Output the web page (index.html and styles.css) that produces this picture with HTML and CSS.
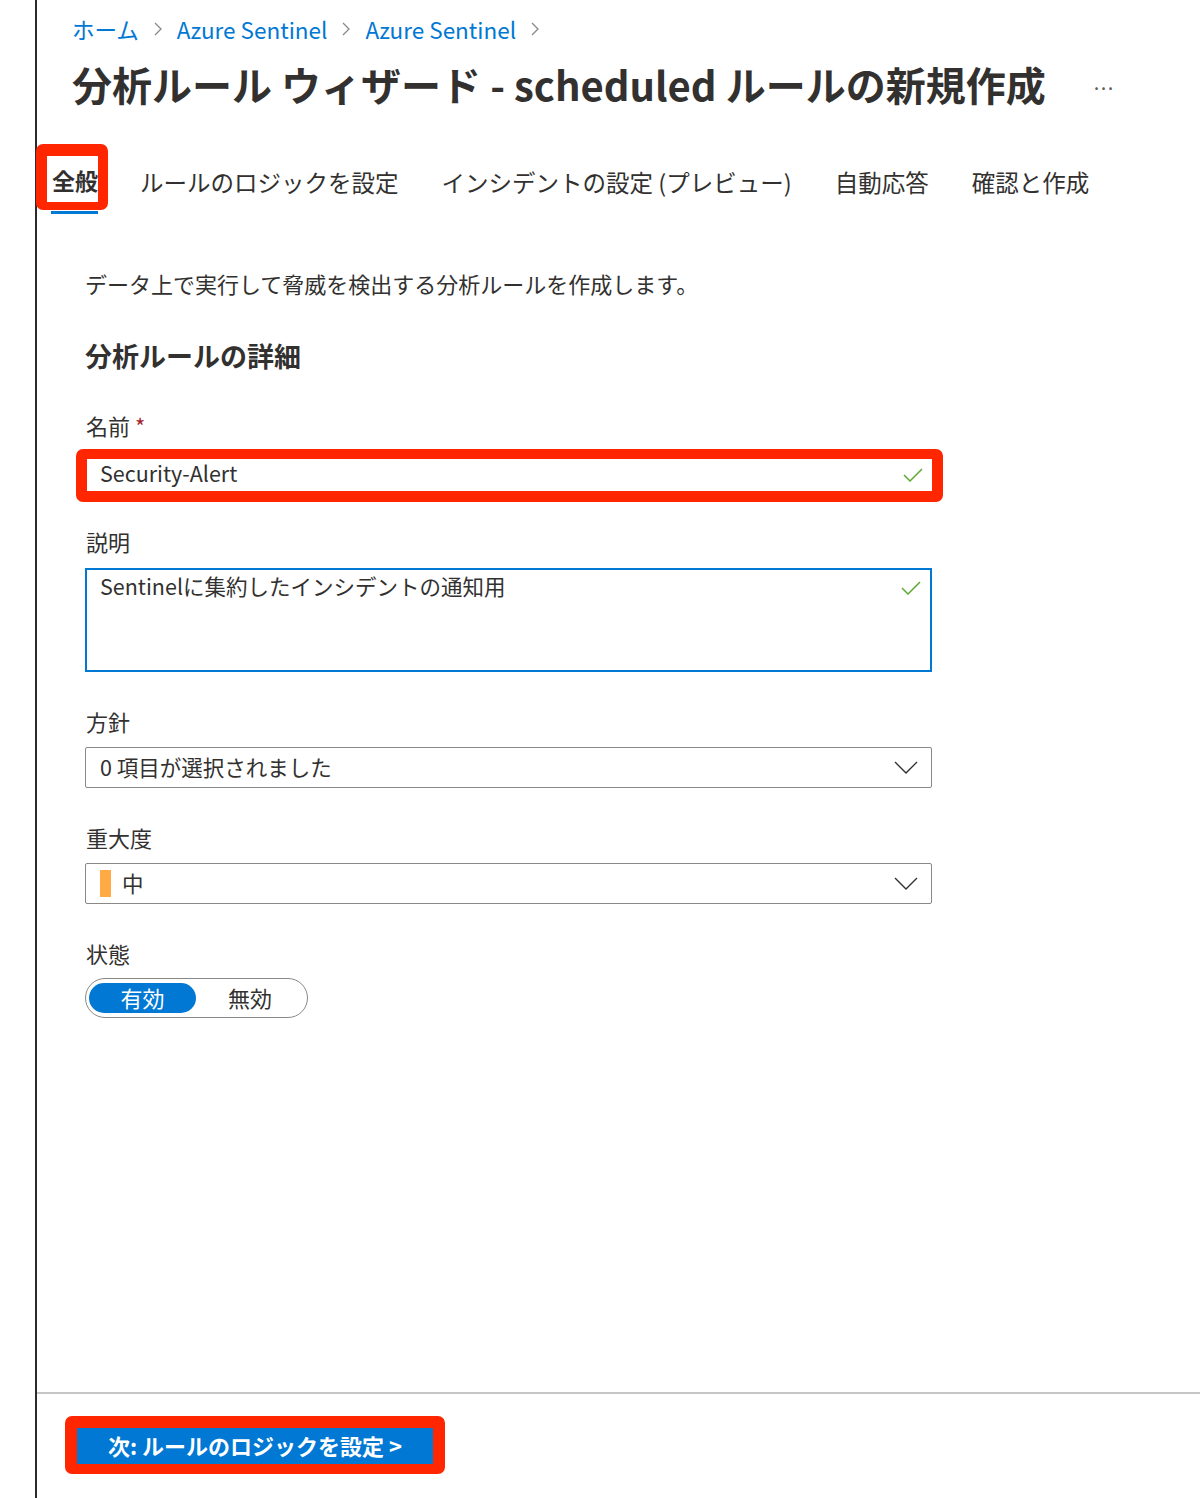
FILE: index.html
```html
<!DOCTYPE html>
<html lang="ja">
<head>
<meta charset="utf-8">
<title>分析ルール ウィザード</title>
<link rel="stylesheet" href="styles.css">
</head>
<body>
<div class="page">
  <header class="header">
    <nav class="crumbs">
      <a class="crumb">ホーム</a>
      <svg class="crumb-sep" viewBox="0 0 8 14" width="8" height="14"><polyline points="1,1 7,7 1,13" fill="none" stroke="#8a8886" stroke-width="1.3"/></svg>
      <a class="crumb">Azure Sentinel</a>
      <svg class="crumb-sep" viewBox="0 0 8 14" width="8" height="14"><polyline points="1,1 7,7 1,13" fill="none" stroke="#8a8886" stroke-width="1.3"/></svg>
      <a class="crumb">Azure Sentinel</a>
      <svg class="crumb-sep" viewBox="0 0 8 14" width="8" height="14"><polyline points="1,1 7,7 1,13" fill="none" stroke="#8a8886" stroke-width="1.3"/></svg>
    </nav>
    <div class="title-row">
      <h1 class="title">分析ルール ウィザード - scheduled ルールの新規作成</h1>
      <span class="more">...</span>
    </div>
  </header>

  <div class="tabs">
    <div class="tab tab-active">
      <div class="hl-tab"><span class="tab-label">全般</span></div>
      <div class="tab-underline"></div>
    </div>
    <div class="tab">ルールのロジックを設定</div>
    <div class="tab">インシデントの設定 (プレビュー)</div>
    <div class="tab">自動応答</div>
    <div class="tab">確認と作成</div>
  </div>

  <main class="content">
    <p class="intro">データ上で実行して脅威を検出する分析ルールを作成します。</p>
    <h2 class="section-title">分析ルールの詳細</h2>

    <div class="label label-name">名前 <span class="req">*</span></div>
    <div class="hl-input">
      <div class="field-inner">
        <span class="field-text">Security-Alert</span>
        <svg class="check" viewBox="0 0 20 14" width="20" height="14"><polyline points="1,7 7,13 19,1" fill="none" stroke="#5ca934" stroke-width="1.5"/></svg>
      </div>
    </div>

    <div class="label label-desc">説明</div>
    <div class="textarea">
      <span class="field-text">Sentinelに集約したインシデントの通知用</span>
      <svg class="check" viewBox="0 0 20 14" width="20" height="14"><polyline points="1,7 7,13 19,1" fill="none" stroke="#5ca934" stroke-width="1.5"/></svg>
    </div>

    <div class="label label-gap">方針</div>
    <div class="dropdown">
      <span class="field-text">0 項目が選択されました</span>
      <svg class="chev" viewBox="0 0 24 14" width="24" height="14"><polyline points="1,1 12,12 23,1" fill="none" stroke="#323130" stroke-width="1.4"/></svg>
    </div>

    <div class="label label-gap">重大度</div>
    <div class="dropdown">
      <span class="sev-bar"></span>
      <span class="field-text sev-text">中</span>
      <svg class="chev" viewBox="0 0 24 14" width="24" height="14"><polyline points="1,1 12,12 23,1" fill="none" stroke="#323130" stroke-width="1.4"/></svg>
    </div>

    <div class="label label-gap">状態</div>
    <div class="toggle">
      <span class="opt opt-on">有効</span>
      <span class="opt">無効</span>
    </div>
  </main>

  <footer class="footer">
    <div class="hl-button">
      <button class="primary">次: ルールのロジックを設定 &gt;</button>
    </div>
  </footer>
</div>
</body>
</html>
```

FILE: styles.css
```css
* { box-sizing: border-box; }

html, body {
  margin: 0;
  padding: 0;
  background: #ffffff;
}

body {
  font-family: "Noto Sans CJK JP", "Noto Sans", sans-serif;
  color: #323130;
}

.page {
  margin-left: 35px;
  border-left: 2px solid #2b2b2b;
  min-height: 1498px;
  display: flex;
  flex-direction: column;
}

.header {
  padding: 14px 0 0 35px;
}

.crumbs {
  display: flex;
  align-items: center;
  gap: 15px;
  height: 30px;
}

.crumb {
  font-size: 22.5px;
  line-height: 30px;
  color: #0078d4;
}

.crumb-sep { display: block; }

.title-row {
  display: flex;
  align-items: center;
  margin-top: 15px;
  height: 50px;
}

.title {
  margin: 0;
  font-size: 40px;
  line-height: 50px;
  font-weight: 700;
  color: #323130;
  white-space: nowrap;
}

.more {
  margin-left: 48px;
  font-size: 20px;
  color: #605e5c;
  line-height: 20px;
  letter-spacing: 1.5px;
  padding-bottom: 4px;
}

.tabs {
  display: flex;
  align-items: flex-start;
  margin-top: 35px;
}

.tab {
  font-size: 23.5px;
  line-height: 30px;
  margin-top: 23px;
  margin-right: 43px;
  color: #323130;
  white-space: nowrap;
}

.tab-active {
  margin-top: 0;
  margin-left: -1px;
  margin-right: 32px;
  display: flex;
  flex-direction: column;
}

.hl-tab {
  border-style: solid;
  border-color: #ff2600;
  border-width: 12px 10px 8px 11px;
  border-radius: 7px;
  padding: 3px 0 0 5px;
  height: 66px;
  background: #fff;
}

.tab-label {
  display: block;
  font-size: 23px;
  line-height: 42px;
  font-weight: 700;
  color: #323130;
}

.tab-underline {
  margin: 1px 0 0 15px;
  width: 47px;
  height: 3px;
  background: #0078d4;
}

.content {
  padding-left: 48px;
  width: 896px;
}

.intro {
  margin: 54px 0 0;
  font-size: 22px;
  line-height: 30px;
}

.section-title {
  margin: 40px 0 0;
  font-size: 27px;
  line-height: 36px;
  font-weight: 700;
}

.label {
  font-size: 22px;
  line-height: 30px;
  padding-left: 1px;
}

.label-name { margin-top: 36px; }
.label-desc { margin-top: 24px; }
.label-gap { margin-top: 34px; }

.req { color: #a4262c; }

.hl-input {
  margin: 9px 0 0 -9px;
  width: 867px;
  border-style: solid;
  border-color: #ff2600;
  border-width: 10px 11px 11px 11px;
  border-radius: 7px;
}

.field-inner {
  height: 32px;
  display: flex;
  align-items: center;
  justify-content: space-between;
  padding: 0 9px 4px 13px;
  background: #fff;
}

.field-inner .check { margin-top: 3px; }

.field-text {
  font-size: 21.5px;
  line-height: 30px;
  color: #323130;
}

.check { display: block; flex: none; }

.textarea {
  margin-top: 12px;
  width: 847px;
  height: 104px;
  border: 2px solid #0078d4;
  display: flex;
  justify-content: space-between;
  align-items: flex-start;
  padding: 1px 9px 0 13px;
}

.textarea .check { margin-top: 10px; }

.dropdown {
  margin-top: 11px;
  width: 847px;
  height: 41px;
  border: 1px solid #8a8886;
  border-radius: 2px;
  display: flex;
  align-items: center;
  padding: 0 13px 0 14px;
}

.dropdown .field-text { margin-top: -2px; }

.dropdown .chev { margin-left: auto; display: block; }

.sev-bar {
  width: 11px;
  height: 27px;
  background: #ffaa44;
  margin-right: 11px;
}

.toggle {
  margin-top: 10px;
  width: 223px;
  height: 40px;
  border: 1.5px solid #8a8886;
  border-radius: 20px;
  display: flex;
  align-items: center;
  padding: 0 3px 0 3px;
}

.opt {
  flex: 1;
  height: 30px;
  line-height: 28px;
  font-size: 22px;
  text-align: center;
  color: #323130;
}

.opt-on {
  flex: none;
  width: 107px;
  background: #0078d4;
  color: #fff;
  border-radius: 15px;
}

.footer {
  margin-top: auto;
  height: 106px;
  border-top: 2px solid #c8c6c4;
  padding: 22px 0 0 28px;
}

.hl-button {
  display: inline-block;
  border-style: solid;
  border-color: #ff2600;
  border-width: 12px 12px 10px 12px;
  border-radius: 7px;
}

.primary {
  display: block;
  width: 356px;
  height: 36px;
  margin: 0;
  border: none;
  background: #0078d4;
  color: #fff;
  font-family: "Noto Sans CJK JP", "Noto Sans", sans-serif;
  font-size: 22px;
  font-weight: 700;
  line-height: 34px;
  padding: 0 0 2px;
  text-align: center;
}
```
